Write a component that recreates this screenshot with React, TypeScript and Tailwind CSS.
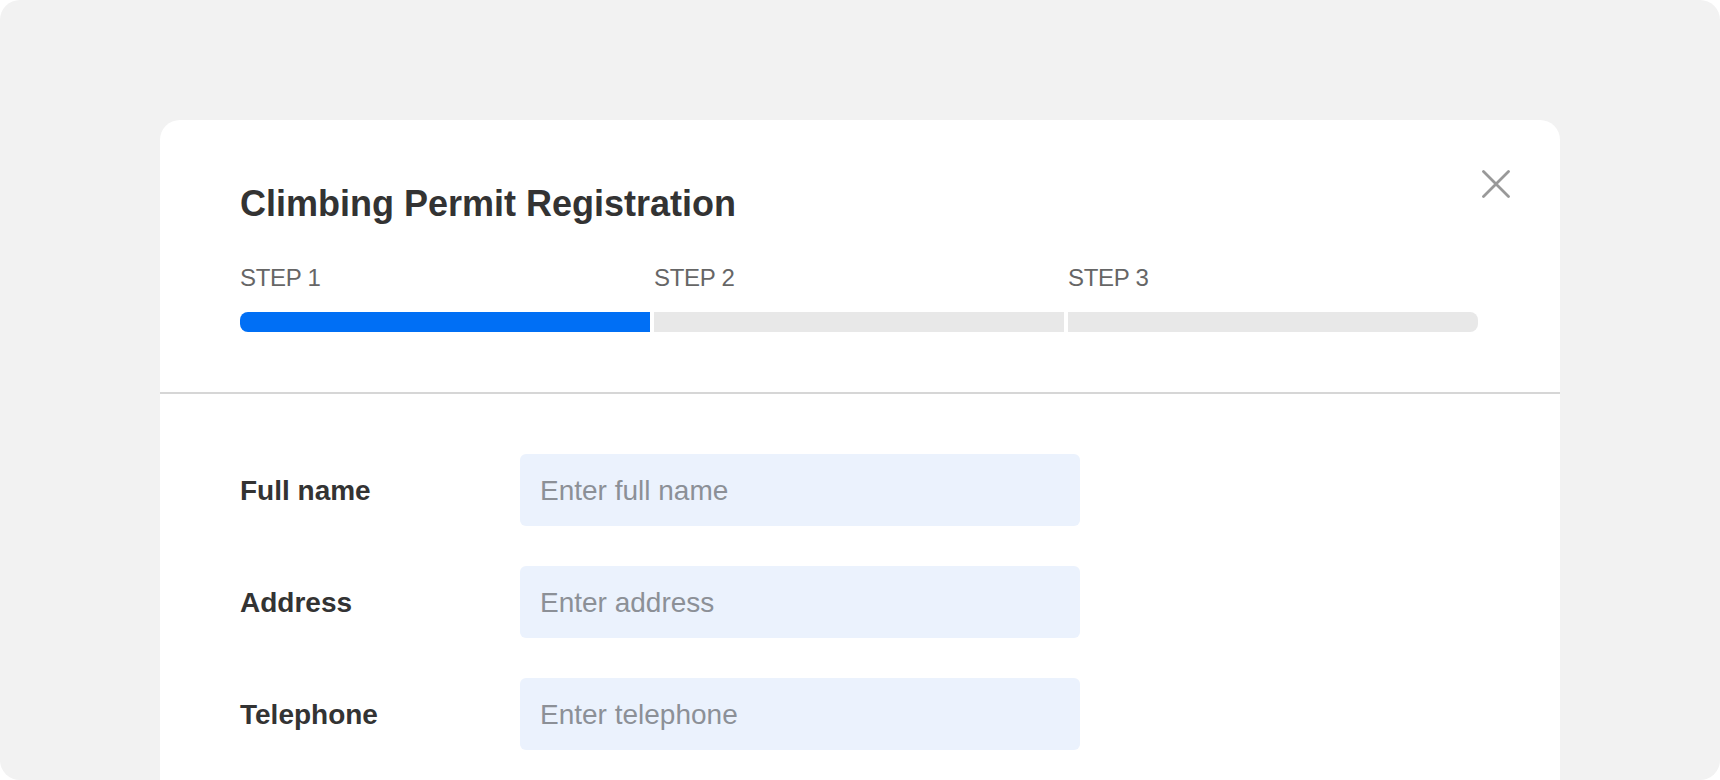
import React from "react";

const steps = ["STEP 1", "STEP 2", "STEP 3"];

const fields = [
  { label: "Full name", placeholder: "Enter full name" },
  { label: "Address", placeholder: "Enter address" },
  { label: "Telephone", placeholder: "Enter telephone" },
];

const CloseIcon = () => (
  <svg width="28" height="28" viewBox="0 0 28 28" fill="none">
    <path
      d="M1.5 1.5L26.5 26.5M26.5 1.5L1.5 26.5"
      stroke="#999999"
      strokeWidth="2.8"
      strokeLinecap="round"
    />
  </svg>
);

export default function App() {
  const current = 0;

  return (
    <div className="w-[1720px] h-[780px] bg-white font-['Liberation_Sans',Arial,sans-serif]">
      <div className="h-full rounded-[20px] bg-[#f2f2f2] overflow-hidden pt-[120px] px-[160px]">
        <div className="relative h-[800px] bg-white rounded-[20px]">
          <button className="absolute top-[50px] right-[50px]" aria-label="Close">
            <CloseIcon />
          </button>

          <header className="pl-[80px] pr-[82px] pt-[66px] pb-[60px] border-b-2 border-[#d6d6d6]">
            <h1 className="text-[36px] leading-none font-bold text-[#333333]">
              Climbing Permit Registration
            </h1>
            <div className="mt-[44px] grid grid-cols-3 gap-[4px]">
              {steps.map((s, i) => (
                <div key={s}>
                  <p className="text-[24px] leading-none text-[#666666] tracking-[-0.3px]">{s}</p>
                  <div
                    className={
                      "mt-[22px] h-[20px] " +
                      (i <= current ? "bg-[#006ff5] " : "bg-[#e8e8e8] ") +
                      (i === 0 ? "rounded-l-[8px] " : "") +
                      (i === steps.length - 1 ? "rounded-r-[8px]" : "")
                    }
                  />
                </div>
              ))}
            </div>
          </header>

          <form className="px-[80px] pt-[60px] flex flex-col gap-[40px]">
            {fields.map((f) => (
              <div key={f.label} className="flex items-center">
                <label className="w-[280px] pt-[2px] text-[28px] font-bold text-[#333333]">{f.label}</label>
                <input
                  type="text"
                  placeholder={f.placeholder}
                  className="w-[560px] h-[72px] rounded-[6px] bg-[#ebf2fd] px-[20px] pt-[2px] text-[28px] text-[#333333] placeholder:text-[#8c9097] outline-none"
                />
              </div>
            ))}
          </form>
        </div>
      </div>
    </div>
  );
}
